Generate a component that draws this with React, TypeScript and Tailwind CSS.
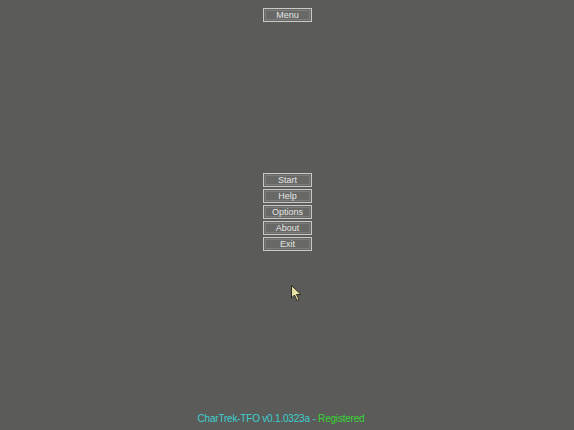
import React from "react";

const items = ["Start", "Help", "Options", "About", "Exit"];

function MenuButton({ label }: { label: string }) {
  return (
    <div className="w-[49px] h-[14px] border border-[#c9c9c6] bg-[#686966] flex items-center justify-center p-[1px]">
      <div className="w-full h-full border border-[#7c7d7a] flex items-center justify-center text-[9px] leading-none text-[#e4e4e2]">
        {label}
      </div>
    </div>
  );
}

export default function App() {
  return (
    <div
      className="relative w-[574px] h-[430px] bg-[#5b5c59] flex flex-col items-center overflow-hidden"
      style={{ fontFamily: '"Liberation Sans", Arial, sans-serif' }}
    >
      <div className="mt-[8px] ml-[1px]">
        <MenuButton label="Menu" />
      </div>

      <div className="mt-[151px] ml-[1px] flex flex-col gap-[2px]">
        {items.map((it) => (
          <MenuButton key={it} label={it} />
        ))}
      </div>

      <div className="mt-auto mb-[6px] ml-[-12px] text-[10px] leading-none tracking-[-0.2px]">
        <span className="text-[#3ccfcf]">CharTrek-TFO v0.1.0323a - </span>
        <span className="text-[#35d435]">Registered</span>
      </div>

      {/* mouse cursor */}
      <svg
        className="absolute left-[291px] top-[285px]"
        width="12"
        height="17"
        viewBox="0 0 12 17"
      >
        <path
          d="M0.5 0.5 L0.5 13 L3.5 10 L6 15.5 L8 14.5 L5.5 9.5 L10 9.5 Z"
          fill="#e9e2a3"
          stroke="#2e2d24"
          strokeWidth="1"
        />
      </svg>
    </div>
  );
}
